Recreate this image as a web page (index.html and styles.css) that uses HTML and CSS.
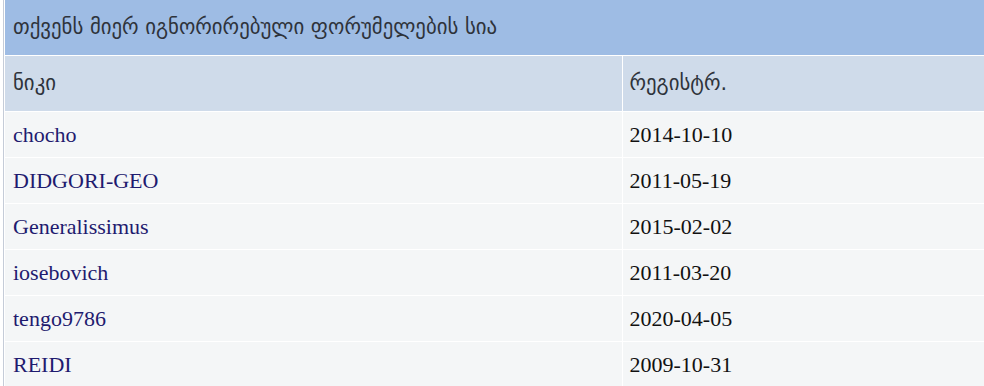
FILE: index.html
```html
<!DOCTYPE html>
<html lang="ka">
<head>
<meta charset="utf-8">
<title>ignored</title>
<link rel="stylesheet" href="styles.css">
</head>
<body>
<div class="wrap">
  <div class="title">თქვენს მიერ იგნორირებული ფორუმელების სია</div>
  <table class="list">
    <colgroup><col class="c1"><col class="c2"></colgroup>
    <thead>
      <tr><th>ნიკი</th><th>რეგისტრ.</th></tr>
    </thead>
    <tbody>
      <tr><td><a class="nick">chocho</a></td><td>2014-10-10</td></tr>
      <tr><td><a class="nick">DIDGORI-GEO</a></td><td>2011-05-19</td></tr>
      <tr><td><a class="nick">Generalissimus</a></td><td>2015-02-02</td></tr>
      <tr><td><a class="nick">iosebovich</a></td><td>2011-03-20</td></tr>
      <tr><td><a class="nick">tengo9786</a></td><td>2020-04-05</td></tr>
      <tr><td><a class="nick">REIDI</a></td><td>2009-10-31</td></tr>
    </tbody>
  </table>
</div>
</body>
</html>
```
FILE: styles.css
```css
html, body { margin: 0; padding: 0; background: #ffffff; }
.wrap {
  margin-left: 3px;
  border-left: 1px solid #c5ccd8;
  background: #ffffff;
}
.title {
  height: 56px;
  box-sizing: border-box;
  padding: 0 0 2px 8px;
  margin-left: 1px;
  display: flex;
  align-items: center;
  background: #9ebce4;
  color: #2e333b;
  font-family: "DejaVu Sans", sans-serif;
  font-size: 20.8px;
  border-bottom: 1px solid #ffffff;
}
.list {
  width: calc(100% - 1px);
  margin-left: 1px;
  border-collapse: collapse;
  table-layout: fixed;
}
.c1 { width: 617px; }
.list th {
  height: 53px;
  padding: 0 0 2px 8px;
  text-align: left;
  font-weight: normal;
  background: #cfdbea;
  color: #2e333b;
  font-family: "DejaVu Sans", sans-serif;
  font-size: 20.8px;
  border-bottom: 1px solid #ffffff;
}
.list th + th, .list td + td { border-left: 1px solid #ffffff; padding-left: 7px; }
.list td {
  height: 45px;
  padding: 0 0 0 8px;
  background: #f4f6f7;
  font-family: "Liberation Serif", "Times New Roman", serif;
  font-size: 22px;
  color: #111111;
  border-bottom: 1px solid #ffffff;
}
.nick { color: #1f1b6f; text-decoration: none; }
```
